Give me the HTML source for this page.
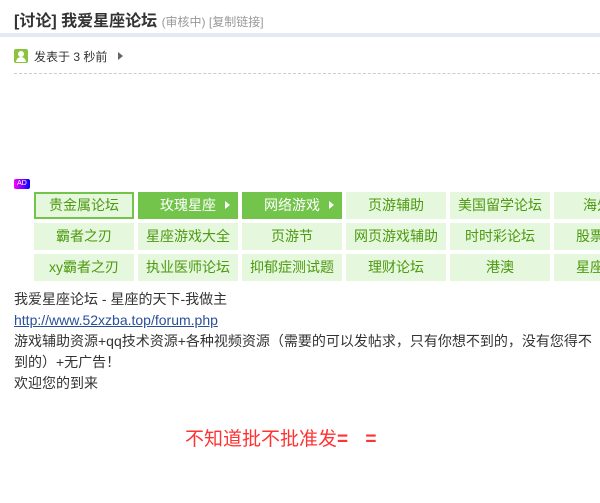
<!DOCTYPE html>
<html><head><meta charset="utf-8"><style>
body{margin:0;width:600px;height:503px;overflow:hidden;background:#fff;font-family:"Liberation Sans","Noto Sans CJK SC",sans-serif;color:#333;position:relative}
.a{position:absolute;white-space:nowrap}
.c{position:absolute;width:100px;height:27px;line-height:27px;text-align:center;font-size:14px;background:#e5f7dc;color:#4c9a10;box-sizing:border-box;overflow:visible}
.b{line-height:23px}
.g{background:#72c44a;color:#fff}
.g:after{content:"";position:absolute;right:8px;top:9px;border-left:5px solid #fff;border-top:4.5px solid transparent;border-bottom:4.5px solid transparent}
.t{font-size:14px;line-height:21px}
</style></head><body>
<div class="a" style="left:14px;top:7px;font-size:16px;font-weight:bold;color:#333">[讨论] 我爱星座论坛 <span style="font-size:12px;font-weight:normal;color:#999">(审核中) [复制链接]</span></div>
<div class="a" style="left:0;top:33px;width:600px;height:4px;background:#e3eaf2"></div>
<div class="a" style="left:14px;top:49px;width:14px;height:14px;background:#8bc43c;border-radius:2px"><div style="position:absolute;left:4px;top:2px;width:6px;height:6px;border-radius:50%;background:#fff"></div><div style="position:absolute;left:2px;top:8px;width:10px;height:5px;border-radius:5px 5px 0 0;background:#fff"></div></div>
<div class="a" style="left:34px;top:48px;font-size:12px;color:#333">发表于 3 秒前</div>
<div class="a" style="left:118px;top:52px;border-left:5px solid #666;border-top:4px solid transparent;border-bottom:4px solid transparent"></div>
<div class="a" style="left:14px;top:73px;width:586px;border-top:1px dashed #ccc"></div>
<div class="a" style="left:14px;top:179px;width:16px;height:10px;background:linear-gradient(90deg,#f0f,#00f);border-radius:2px;color:#fff;font-size:7px;line-height:10px;text-align:center">AD</div>
<div class="c b" style="left:34px;top:192px;border:2px solid #72c44a">贵金属论坛</div>
<div class="c g" style="left:138px;top:192px">玫瑰星座</div>
<div class="c g" style="left:242px;top:192px">网络游戏</div>
<div class="c" style="left:346px;top:192px">页游辅助</div>
<div class="c" style="left:450px;top:192px">美国留学论坛</div>
<div class="c" style="left:554px;top:192px;text-align:left;padding-left:29px">海外</div>
<div class="c" style="left:34px;top:223px">霸者之刃</div>
<div class="c" style="left:138px;top:223px">星座游戏大全</div>
<div class="c" style="left:242px;top:223px">页游节</div>
<div class="c" style="left:346px;top:223px">网页游戏辅助</div>
<div class="c" style="left:450px;top:223px">时时彩论坛</div>
<div class="c" style="left:554px;top:223px;text-align:left;padding-left:22px">股票</div>
<div class="c" style="left:34px;top:254px">xy霸者之刃</div>
<div class="c" style="left:138px;top:254px">执业医师论坛</div>
<div class="c" style="left:242px;top:254px">抑郁症测试题</div>
<div class="c" style="left:346px;top:254px">理财论坛</div>
<div class="c" style="left:450px;top:254px">港澳</div>
<div class="c" style="left:554px;top:254px;text-align:left;padding-left:22px">星座</div>
<div class="a t" style="left:14px;top:289px;color:#333">我爱星座论坛 - 星座的天下-我做主<br><span style="color:#2a4f9a;text-decoration:underline">http://www.52xzba.top/forum.php</span><br>游戏辅助资源+qq技术资源+各种视频资源（需要的可以发帖求，只有你想不到的，没有您得不<br>到的）+无广告！<br>欢迎您的到来</div>
<div class="a" style="left:185px;top:424px;font-size:19px;color:#f33">不知道批不批准发<b style="letter-spacing:6px">= =</b></div>
</body></html>
